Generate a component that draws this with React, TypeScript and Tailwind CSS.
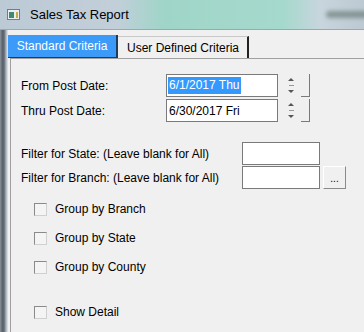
import React from "react"

const font = { fontFamily: '"Liberation Sans", Arial, sans-serif' }

function DateRow({ label, value, selected }: { label: string; value: string; selected?: boolean }) {
  return (
    <div className="flex items-center h-[23px]">
      <div className="w-[145px] text-[12px] text-black">{label}</div>
      <div className="w-[112px] h-[23px] bg-white border border-[#7a7a7a] flex items-center pl-[1px] text-[12px]">
        <span className={selected ? "bg-[#3399ff] text-white px-[1px] leading-[17px]" : "px-[1px] text-black"}>{value}</span>
      </div>
      <div className="ml-[6px] w-[14px] flex flex-col items-center gap-[4px]">
        <div className="w-0 h-0 border-l-[3px] border-r-[3px] border-b-[3px] border-l-transparent border-r-transparent border-b-[#555]" />
        <div className="w-[5px] h-[1px] bg-[#999]" />
        <div className="w-0 h-0 border-l-[3px] border-r-[3px] border-t-[3px] border-l-transparent border-r-transparent border-t-[#555]" />
      </div>
      <div className="ml-[3px] w-[9px] h-[23px] border-r border-b border-[#7a7a7a]" />
    </div>
  )
}

function Check({ label, className }: { label: string; className?: string }) {
  return (
    <div className={"flex items-center h-[16px] " + (className ?? "")}>
      <div className="w-[13px] h-[13px] bg-[#f4f4f4] border border-[#8a8a8a] border-r-[#d0d0d0] border-b-[#d0d0d0]" />
      <span className="ml-[8px] text-[12px] text-black">{label}</span>
    </div>
  )
}

export default function App() {
  return (
    <div className="w-[364px] h-[332px] overflow-hidden flex flex-col bg-[#f0f0f0]" style={font}>
      {/* title bar */}
      <div className="h-[30px] flex items-center bg-[linear-gradient(90deg,#bccad6_0%,#c2cfd9_32%,#9fd5c8_45%,#a6d9cd_78%,#c8d5dd_88%,#bcc9d2_100%)] border-b border-[#9aa8b4]">
        <div className="ml-[7px] w-[13px] h-[11px] bg-[#e8eef2] border border-[#6f7f8a] flex items-center pl-[1px]">
          <div className="w-[5px] h-[6px] bg-[#3e8a6a]" />
          <div className="ml-[2px] w-[2px] h-[6px] bg-[#c9a94a]" />
        </div>
        <span className="ml-[10px] text-[13px] text-black">Sales Tax Report</span>
        <div className="ml-auto mr-[-6px] w-[44px] h-[7px] rounded-full bg-[#5d6f68] opacity-60 blur-[2px]" />
      </div>

      <div className="flex flex-1">
        {/* window frame */}
        <div className="w-[8px] bg-[linear-gradient(90deg,#8a939c_0%,#5a626c_30%,#606a74_50%,#a8b0b8_75%,#e6e9ec_100%)]" />

        <div className="flex-1 flex flex-col pl-[2px]">
          {/* tabs */}
          <div className="flex items-end h-[28px] pt-[4px]">
            <div className="h-[23px] w-[110px] bg-[#3c9af8] border-r-2 border-b border-[#1f3c5a] flex items-center justify-center text-[12px] text-white -ml-[2px]">
              Standard Criteria
            </div>
            <div className="h-[22px] w-[131px] bg-[#f0f0f0] border-t border-[#c8c8c8] border-r-2 border-r-[#222] flex items-center pl-[9px] text-[12px] text-black">
              User Defined Criteria
            </div>
          </div>

          {/* panel */}
          <div className="flex-1 border-t border-l border-[#a0a0a0] bg-[#f0f0f0] flex flex-col pl-[10px] pt-[15px]">
            <DateRow label="From Post Date:" value="6/1/2017 Thu" selected />
            <div className="h-[2px]" />
            <DateRow label="Thru Post Date:" value="6/30/2017 Fri" />

            <div className="mt-[20px] flex items-center h-[23px]">
              <div className="w-[221px] text-[12px] text-black">Filter for State: (Leave blank for All)</div>
              <div className="w-[78px] h-[23px] bg-white border border-[#7a7a7a]" />
            </div>
            <div className="mt-[1px] flex items-center h-[23px]">
              <div className="w-[221px] text-[12px] text-black">Filter for Branch: (Leave blank for All)</div>
              <div className="w-[78px] h-[23px] bg-white border border-[#7a7a7a]" />
              <div className="ml-[3px] w-[23px] h-[23px] bg-[#f0f0f0] border border-white border-r-[#8a8a8a] border-b-[#8a8a8a] flex items-end justify-center pb-[4px] text-[10px] leading-none text-black">
                ...
              </div>
            </div>

            <div className="pl-[13px] flex flex-col">
              <Check label="Group by Branch" className="mt-[12px]" />
              <Check label="Group by State" className="mt-[13px]" />
              <Check label="Group by County" className="mt-[13px]" />
              <Check label="Show Detail" className="mt-[29px]" />
            </div>
          </div>
        </div>
      </div>
    </div>
  )
}
